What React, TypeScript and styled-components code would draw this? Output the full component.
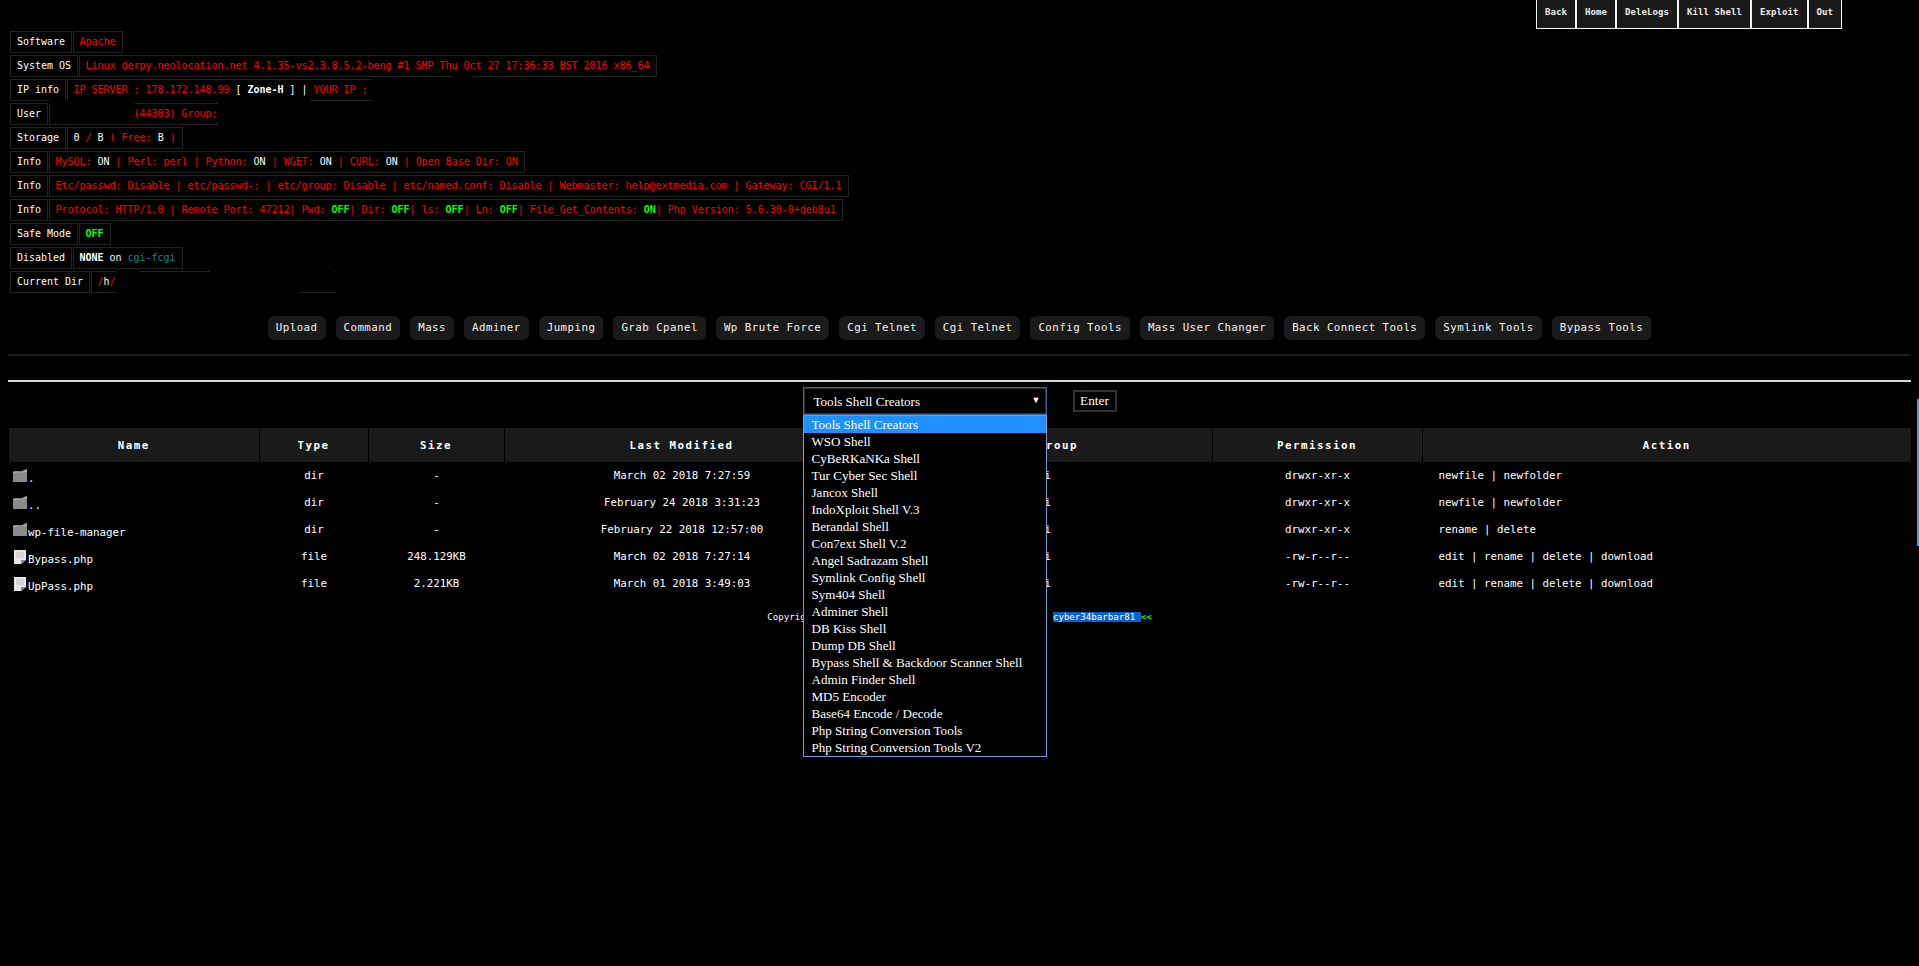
import React from "react";
import styled, { createGlobalStyle } from "styled-components";

const GlobalStyle = createGlobalStyle`
  html, body {
    margin: 0;
    padding: 0;
    background: #000;
    color: #fff;
    font-family: "DejaVu Sans Mono", "Liberation Mono", monospace;
  }
  #root {
    min-height: 966px;
    position: relative;
    overflow: hidden;
  }
`;

const NAV_ITEMS = ["Back", "Home", "DeleLogs", "Kill Shell", "Exploit", "Out"];
const MENU_ITEMS = [
  "Upload",
  "Command",
  "Mass",
  "Adminer",
  "Jumping",
  "Grab Cpanel",
  "Wp Brute Force",
  "Cgi Telnet",
  "Cgi Telnet",
  "Config Tools",
  "Mass User Changer",
  "Back Connect Tools",
  "Symlink Tools",
  "Bypass Tools",
];
const SHELL_OPTIONS = [
  "Tools Shell Creators",
  "WSO Shell",
  "CyBeRKaNKa Shell",
  "Tur Cyber Sec Shell",
  "Jancox Shell",
  "IndoXploit Shell V.3",
  "Berandal Shell",
  "Con7ext Shell V.2",
  "Angel Sadrazam Shell",
  "Symlink Config Shell",
  "Sym404 Shell",
  "Adminer Shell",
  "DB Kiss Shell",
  "Dump DB Shell",
  "Bypass Shell & Backdoor Scanner Shell",
  "Admin Finder Shell",
  "MD5 Encoder",
  "Base64 Encode / Decode",
  "Php String Conversion Tools",
  "Php String Conversion Tools V2",
];

const DIR_ACTIONS = "newfile | newfolder";
const FILE_ACTIONS = "edit | rename | delete | download";
const FILES = [
  { name: ".", type: "dir", size: "-", date: "March 02 2018 7:27:59", perm: "drwxr-xr-x", actions: DIR_ACTIONS },
  { name: "..", type: "dir", size: "-", date: "February 24 2018 3:31:23", perm: "drwxr-xr-x", actions: DIR_ACTIONS },
  { name: "wp-file-manager", type: "dir", size: "-", date: "February 22 2018 12:57:00", perm: "drwxr-xr-x", actions: "rename | delete" },
  { name: "Bypass.php", type: "file", size: "248.129KB", date: "March 02 2018 7:27:14", perm: "-rw-r--r--", actions: FILE_ACTIONS },
  { name: "UpPass.php", type: "file", size: "2.221KB", date: "March 01 2018 3:49:03", perm: "-rw-r--r--", actions: FILE_ACTIONS },
];
const COLUMNS = [
  { title: "Name", width: 250 },
  { title: "Type", width: 109 },
  { title: "Size", width: 136 },
  { title: "Last Modified", width: 355 },
  { title: "Owner", width: 45 },
  { title: "Group", width: 308 },
  { title: "Permission", width: 210 },
  { title: "Action", width: 489 },
];

const FolderIcon = () => (
  <IconSvg width="15" height="14" viewBox="0 0 15 14">
    <path d="M0 3 L1 2 L9 2 L13 0 L14 0 L14 13 L0 13 Z" fill="#8a8a8a" />
    <path d="M0 3 L9 3 L13 1 L14 1 L14 3 L0 4 Z" fill="#a8a8a8" />
  </IconSvg>
);

const FileIcon = () => (
  <FileSvg width="15" height="15" viewBox="0 0 15 15">
    <path d="M1 0 L13 0 L13 10 L8 14 L1 14 Z" fill="#e8e8e8" />
    <path d="M8 14 L8 10 L13 10 Z" fill="#8a8a8a" />
    <path d="M3 3 H11 M3 5 H11 M3 7 H11" stroke="#bdbdbd" strokeWidth="1" />
  </FileSvg>
);

export default function App() {
  return (
    <Page>
      <GlobalStyle />
      <TopNav>
        {NAV_ITEMS.map((item) => (
          <TopNavItem key={item}>{item}</TopNavItem>
        ))}
      </TopNav>

      <InfoList>
        <InfoRow>
          <Label>Software</Label>
          <Value><Red>Apache</Red></Value>
        </InfoRow>
        <InfoRow>
          <Label>System OS</Label>
          <Value><Red>Linux derpy.neolocation.net 4.1.35-vs2.3.8.5.2-beng #1 SMP Thu Oct 27 17:36:33 BST 2016 x86_64</Red></Value>
          <Patch $x={451} $w={22} $edge="bottom" />
        </InfoRow>
        <InfoRow>
          <Label>IP info</Label>
          <Value $open $w={304}>
            <Red>IP SERVER : 178.172.148.99 </Red>
            <White>[ </White><Strong>Zone-H</Strong><White> ] | </White>
            <Red>YOUR IP :</Red>
          </Value>
          <Patch $x={49} $w={261} $edge="bottom" />
        </InfoRow>
        <InfoRow>
          <Label>User</Label>
          <Value $open $w={169} $indent={78}><Red>(44303) Group:</Red></Value>
          <Patch $x={49} $w={86} $edge="top" />
        </InfoRow>
        <InfoRow>
          <Label>Storage</Label>
          <Value>
            <White>0</White> <Red>/</Red> <White>B</White> <Red>( Free:</Red> <White>B</White> <Red>)</Red>
          </Value>
        </InfoRow>
        <InfoRow>
          <Label>Info</Label>
          <Value>
            <Red>MySQL: </Red><White>ON</White><Red> | </Red>
            <Red>Perl: perl</Red><Red> | </Red>
            <Red>Python: </Red><White>ON</White><Red> | </Red>
            <Red>WGET: </Red><White>ON</White><Red> | </Red>
            <Red>CURL: </Red><White>ON</White><Red> | </Red>
            <Red>Open Base Dir: ON</Red>
          </Value>
        </InfoRow>
        <InfoRow>
          <Label>Info</Label>
          <Value>
            <Red>Etc/passwd: Disable | etc/passwd-: | etc/group: Disable | etc/named.conf: Disable | Webmaster: help@extmedia.com | Gateway: CGI/1.1</Red>
          </Value>
        </InfoRow>
        <InfoRow>
          <Label>Info</Label>
          <Value>
            <Red>Protocol: HTTP/1.0 | Remote Port: 47212| Pwd: </Red><Lime>OFF</Lime>
            <Red>| Dir: </Red><Lime>OFF</Lime>
            <Red>| ls: </Red><Lime>OFF</Lime>
            <Red>| Ln: </Red><Lime>OFF</Lime>
            <Red>| File_Get_Contents: </Red><Lime>ON</Lime>
            <Red>| Php Version: 5.6.30-0+deb8u1</Red>
          </Value>
        </InfoRow>
        <InfoRow>
          <Label>Safe Mode</Label>
          <Value><Lime>OFF</Lime></Value>
        </InfoRow>
        <InfoRow>
          <Label>Disabled</Label>
          <Value><Strong>NONE</Strong> <White>on</White> <Teal>cgi-fcgi</Teal></Value>
        </InfoRow>
        <InfoRow>
          <Label>Current Dir</Label>
          <Value $open $w={245}><Red>/</Red><White>h</White><Red>/</Red></Value>
          <Patch $x={116} $w={24} $edge="top" />
          <Patch $x={210} $w={125} $edge="top" />
          <Patch $x={116} $w={184} $edge="bottom" />
        </InfoRow>
      </InfoList>

      <Menu>
        {MENU_ITEMS.map((item, i) => (
          <MenuButton key={i}>{item}</MenuButton>
        ))}
      </Menu>

      <DarkRule />
      <LightRule />

      <ToolForm>
        <SelectWrap>
          <SelectBox>
            Tools Shell Creators
            <SelectArrow>▼</SelectArrow>
          </SelectBox>
          <OptionList>
            {SHELL_OPTIONS.map((option, i) => (
              <Option key={option} $active={i === 0}>{option}</Option>
            ))}
          </OptionList>
        </SelectWrap>
        <EnterButton>Enter</EnterButton>
      </ToolForm>

      <FileTable>
        <colgroup>
          {COLUMNS.map((col) => (
            <col key={col.title} width={col.width} />
          ))}
        </colgroup>
        <thead>
          <tr>
            {COLUMNS.map((col) => (
              <HeadCell key={col.title}>{col.title}</HeadCell>
            ))}
          </tr>
        </thead>
        <tbody>
          {FILES.map((file) => (
            <tr key={file.name}>
              <NameCell>
                {file.type === "dir" ? <FolderIcon /> : <FileIcon />}
                {file.name}
              </NameCell>
              <Cell>{file.type}</Cell>
              <Cell>{file.size}</Cell>
              <Cell>{file.date}</Cell>
              <Cell />
              <GroupCell>i</GroupCell>
              <Cell>{file.perm}</Cell>
              <ActionCell>{file.actions}</ActionCell>
            </tr>
          ))}
        </tbody>
      </FileTable>

      <Footer>
        Copyright 2018 Shell Tools - All Rights Reserved <FooterMark>&gt;&gt; </FooterMark>
        <FooterName>cyber34barbar81 </FooterName>
        <FooterMark>&lt;&lt;</FooterMark>
      </Footer>

      <ScrollMark />
    </Page>
  );
}

const Page = styled.div`
  width: 1919px;
`;

const IconSvg = styled.svg`
  vertical-align: -1px;
`;

const FileSvg = styled.svg`
  vertical-align: -2px;
`;

const TopNav = styled.nav`
  display: flex;
  justify-content: flex-end;
  padding-right: 77px;
  height: 29px;
`;

const TopNavItem = styled.a`
  display: flex;
  align-items: center;
  padding: 0 8px 4px;
  background: #1a1a1a;
  border: 1px solid #f2f2f2;
  border-top: none;
  font-size: 9px;
  font-weight: bold;
  letter-spacing: 0.08px;
  color: #eee;
  white-space: pre;
`;

const InfoList = styled.div`
  display: flex;
  flex-direction: column;
  align-items: flex-start;
  gap: 2px;
  margin: 2px 0 0 10px;
`;

const InfoRow = styled.div`
  position: relative;
  display: flex;
  gap: 1px;
  height: 22px;
  font-size: 10px;
  line-height: 20px;
  letter-spacing: -0.02px;
  white-space: pre;
`;

const Label = styled.div`
  padding: 0 5.5px 0 6px;
  border: 1px solid #222;
  color: #fff;
`;

const Value = styled.div<{ $open?: boolean; $w?: number; $indent?: number }>`
  padding: 0 6px;
  padding-left: ${(p) => 6 + (p.$indent ?? 0)}px;
  border: 1px solid #222;
  border-right: ${(p) => (p.$open ? "none" : "1px solid #222")};
  width: ${(p) => (p.$w ? `${p.$w}px` : "auto")};
  box-sizing: border-box;
  color: #fff;
`;

/* wipes part of a cell border where the address was blacked out */
const Patch = styled.span<{ $x: number; $w: number; $edge: "top" | "bottom" }>`
  position: absolute;
  left: ${(p) => p.$x - 10}px;
  width: ${(p) => p.$w}px;
  height: 1px;
  background: #000;
  ${(p) => (p.$edge === "top" ? "top: 0;" : "bottom: 0;")}
`;

const Red = styled.span`
  color: #ff0000;
`;

const White = styled.span`
  color: #fff;
`;

const Strong = styled.span`
  color: #fff;
  font-weight: bold;
`;

const Lime = styled.span`
  color: #00ff00;
  font-weight: bold;
`;

const Teal = styled.span`
  color: #008b8b;
`;

const Menu = styled.div`
  display: flex;
  justify-content: center;
  gap: 10px;
  margin-top: 23px;
`;

const MenuButton = styled.a`
  height: 24px;
  padding: 0 8px;
  background: #1a1a1a;
  border-radius: 6px;
  font-size: 10.8px;
  line-height: 23px;
  letter-spacing: 0.455px;
  color: #f4f4f4;
  white-space: pre;
`;

const DarkRule = styled.hr`
  height: 2px;
  margin: 14px 8px 0;
  border: none;
  background: #1c1c1c;
`;

const LightRule = styled.hr`
  height: 2px;
  margin: 24px 8px 0;
  border: none;
  background: #d8d8d8;
`;

const ToolForm = styled.div`
  display: flex;
  justify-content: center;
  align-items: center;
  gap: 26px;
  margin-top: 5px;
  height: 28px;
`;

const SelectWrap = styled.div`
  position: relative;
  width: 244px;
  height: 28px;
`;

const SelectBox = styled.div`
  position: relative;
  box-sizing: border-box;
  height: 28px;
  padding-left: 10px;
  border: 1px solid #3f5f8f;
  outline: 1px solid #333;
  outline-offset: -2px;
  background: #000;
  font-family: "Liberation Serif", serif;
  font-size: 13.07px;
  line-height: 28px;
  color: #fff;
`;

const SelectArrow = styled.span`
  position: absolute;
  right: 5px;
  top: 1px;
  font-size: 9px;
  line-height: 22px;
  color: #fff;
`;

const OptionList = styled.div`
  position: absolute;
  z-index: 5;
  left: 0;
  right: 0;
  top: 28px;
  border: 1px solid #7b9ad6;
  background: #000;
  font-family: "Liberation Serif", serif;
  font-size: 13.07px;
`;

const Option = styled.div<{ $active: boolean }>`
  height: 17px;
  padding-left: 8px;
  line-height: 18px;
  color: #fff;
  white-space: pre;
  background: ${(p) => (p.$active ? "#1e90ff" : "#000")};
`;

const EnterButton = styled.button`
  box-sizing: border-box;
  width: 44px;
  height: 22px;
  padding: 0;
  background: #000;
  border: 2px solid #333;
  font-family: "Liberation Serif", serif;
  font-size: 13.33px;
  color: #fff;
`;

const FileTable = styled.table`
  width: 1902px;
  margin: 13px 0 0 9px;
  table-layout: fixed;
  border-collapse: collapse;
`;

const HeadCell = styled.th`
  height: 34px;
  padding: 0;
  background: #1a1a1a;
  border-right: 1px solid #000;
  font-size: 10.8px;
  font-weight: bold;
  letter-spacing: 1.5px;
  color: #fff;
  text-align: center;
  overflow: hidden;
  white-space: pre;

  &:last-child {
    border-right: none;
  }
`;

const Cell = styled.td`
  height: 27px;
  padding: 0 0 0 1px;
  font-size: 10.8px;
  color: #fff;
  text-align: center;
  white-space: pre;
`;

const NameCell = styled(Cell)`
  padding-left: 4px;
  text-align: left;
  line-height: 14px;
  padding-top: 4px;
  box-sizing: border-box;
`;

const GroupCell = styled(Cell)`
  padding-right: 161px;
  text-align: right;
`;

const ActionCell = styled(Cell)`
  padding-left: 16.5px;
  text-align: left;
`;

const Footer = styled.footer`
  margin-top: 14px;
  font-size: 9.15px;
  line-height: 13px;
  color: #fff;
  text-align: center;
  white-space: pre;
`;

const FooterMark = styled.span`
  color: #00ff00;
  font-weight: bold;
`;

const FooterName = styled.span`
  background: #0a5fcf;
  color: #fff;
`;

const ScrollMark = styled.div`
  position: absolute;
  right: 0;
  top: 399px;
  width: 2px;
  height: 147px;
  background: #29abe2;
`;
